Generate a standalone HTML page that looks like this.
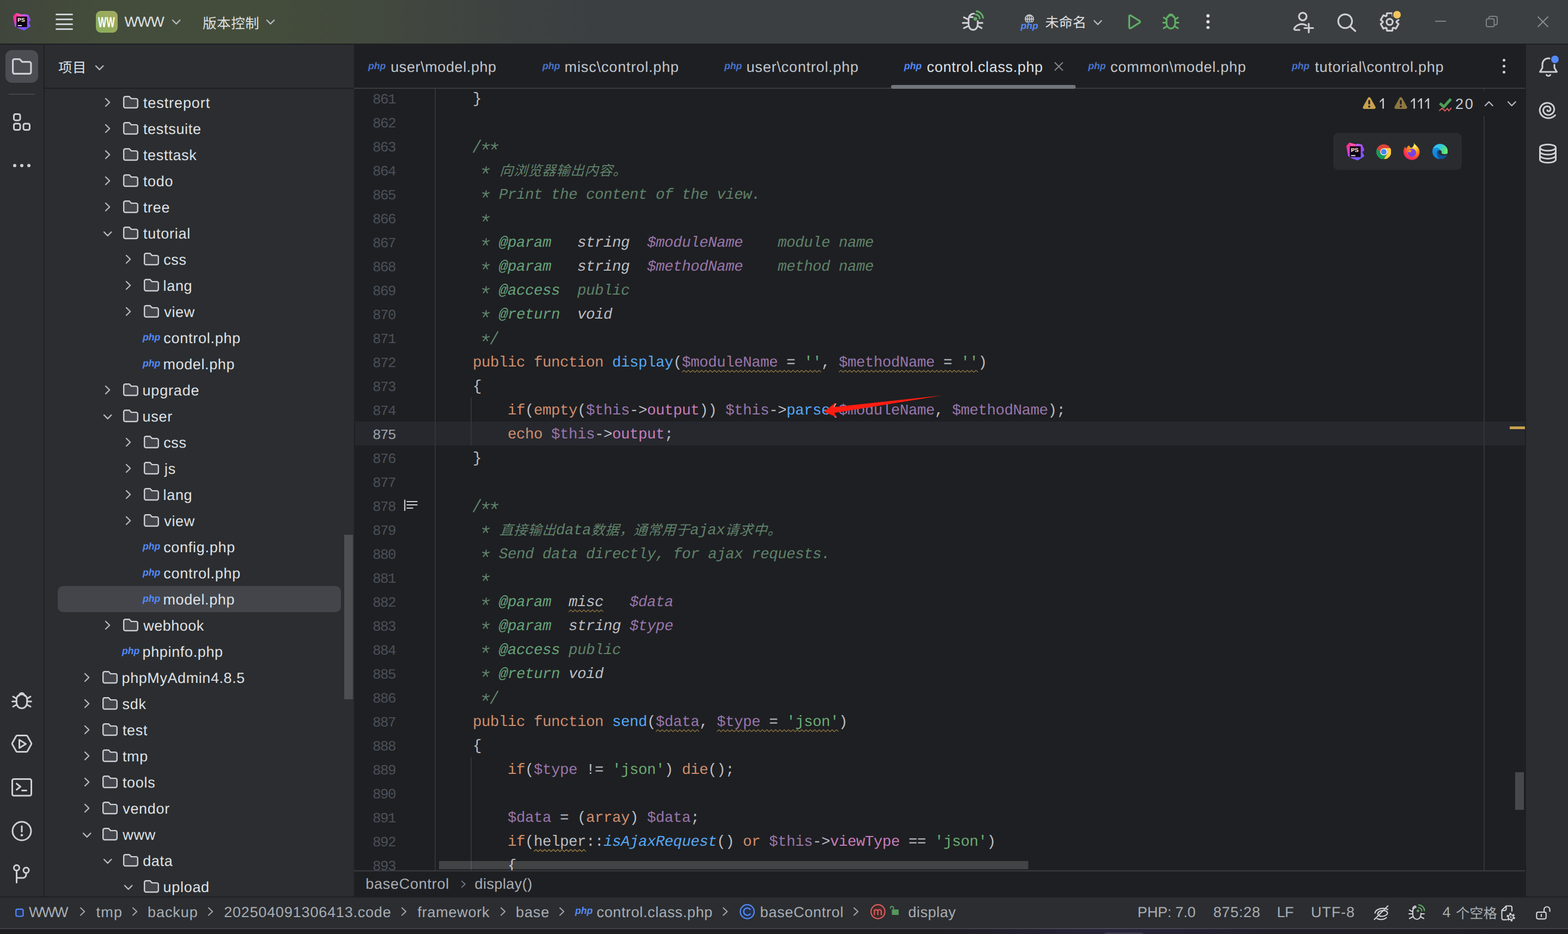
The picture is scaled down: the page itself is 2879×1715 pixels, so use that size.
<!DOCTYPE html>
<html><head><meta charset="utf-8"><title>PhpStorm</title>
<style>
html,body{margin:0;padding:0;}
body{width:2879px;height:1715px;overflow:hidden;background:#1E1F22;position:relative;font-family:"Liberation Sans",sans-serif;font-kerning:none;text-rendering:geometricPrecision;}
.r{position:absolute;display:block;}
.t{position:absolute;white-space:pre;display:block;}
.c{position:absolute;white-space:pre;font-family:"Liberation Mono",monospace;font-size:27.5px;letter-spacing:-0.503px;line-height:44px;height:44px;left:804px;color:#BCBEC4;}
.c i{font-style:italic;}
.ln{left:680px;width:46.2px;text-align:right;font-family:'Liberation Mono',monospace;font-size:26px;line-height:44px;letter-spacing:-1.5px;}
.k{color:#CF8E6D}.f{color:#56A8F5}.v{color:#9876AA}.p{color:#C77DBB}.s{color:#6AAB73}.d{color:#5F826B}.g{color:#67A37C}
</style></head><body>
<div class="r" style="left:0px;top:0px;width:2879px;height:80px;background:linear-gradient(to right,#40463C 0px,#444D3B 200px,#444D3B 480px,#41473F 760px,#3D4141 950px,#3C3F41 1100px);"></div><div class="r" style="left:0px;top:80px;width:2879px;height:2px;background:#1E1F22;"></div><div class="r" style="left:0px;top:82px;width:80px;height:1565px;background:#2B2D30;"></div><div class="r" style="left:80px;top:82px;width:2px;height:1565px;background:#1E1F22;"></div><div class="r" style="left:82px;top:82px;width:568px;height:1565px;background:#2B2D30;"></div><div class="r" style="left:82px;top:161px;width:568px;height:2px;background:#1E1F22;"></div><div class="r" style="left:2802px;top:82px;width:77px;height:1565px;background:#2B2D30;"></div><div class="r" style="left:0px;top:1646px;width:2879px;height:2px;background:#1E1F22;"></div><div class="r" style="left:0px;top:1648px;width:2879px;height:56px;background:#2B2D30;"></div><div class="r" style="left:0px;top:1704px;width:2879px;height:2px;background:linear-gradient(to right,#3F3F46 0,#3F3F46 60%,#4A4957 71%,#403F48 82%,#3F3F46 100%);"></div><div class="r" style="left:0px;top:1706px;width:2879px;height:9px;background:linear-gradient(to right,#1F1E23 0,#1F1E23 60%,#262339 71%,#201F27 82%,#1F1E23 100%);"></div><div class="r" style="left:2026px;top:1712px;width:75px;height:6px;background:#3A374B;border-radius:6px 6px 0 0;"></div><svg class="r" style="left:23.9px;top:23.9px;" width="32.2" height="32.2" viewBox="0 0 32 32"><defs><linearGradient id="psg1" x1="0.1" y1="0" x2="0.5" y2="1"><stop offset="0" stop-color="#FF2E8C"/><stop offset=".3" stop-color="#F535A0"/><stop offset=".6" stop-color="#B74AF7"/><stop offset="1" stop-color="#6B57FF"/></linearGradient>
<linearGradient id="psh1" x1="0" y1="0" x2="0.3" y2="1"><stop offset="0" stop-color="#C06CFF"/><stop offset=".5" stop-color="#9A48F2"/><stop offset="1" stop-color="#7A58FC"/></linearGradient></defs>
<path d="M0 5.7 L5.2 0 L16.9 2.85 L19.3 2 L27.8 3.35 L32 12.9 L28.5 16.9 L32 24.1 L20.3 31.8 L9.2 27.6 L3.2 24Z" fill="url(#psg1)"/>
<path d="M5.2 0 L16.9 2.85 L15.5 6.4 L8 5Z" fill="#FF5CAB" opacity=".8"/>
<path d="M15.3 5 L19.3 2 L27.8 3.35 L32 12.9 L28.5 16.9 L32 24.1 L25.6 28.3 L25.6 6.4Z" fill="url(#psh1)"/>
<rect x="6.2" y="6.4" width="19.4" height="19.3" fill="#0B020F"/>
<text x="8.3" y="16" font-family="Liberation Sans,sans-serif" font-weight="700" font-size="10" fill="#fff">PS</text>
<rect x="8.4" y="22.1" width="7.7" height="1.7" fill="#fff"/></svg><div class="r" style="left:102px;top:25.299999999999997px;width:32px;height:3.2px;background:#CED0D6;border-radius:1.6px;"></div><div class="r" style="left:102px;top:34.199999999999996px;width:32px;height:3.2px;background:#CED0D6;border-radius:1.6px;"></div><div class="r" style="left:102px;top:43.0px;width:32px;height:3.2px;background:#CED0D6;border-radius:1.6px;"></div><div class="r" style="left:102px;top:51.9px;width:32px;height:3.2px;background:#CED0D6;border-radius:1.6px;"></div><div class="r" style="left:176px;top:20px;width:40px;height:40px;background:linear-gradient(45deg,#88AE5A,#A5A95F);border-radius:9px;"></div><span class="t" style="left:180.27px;top:26px;font-size:26.8px;line-height:30px;color:#fff;font-weight:700;letter-spacing:0.462px;transform:scaleX(.6);transform-origin:0 0;">WW</span><span class="t" style="left:228.48px;top:25px;font-size:26.5px;line-height:30px;color:#DFE1E5;letter-spacing:-0.914px;">WWW</span><svg class="r" style="left:315.3px;top:34.800000000000004px;" width="17.4" height="10.8" viewBox="0 0 17.4 10.8"><path d="M2 2 L8.7 8.8 L15.4 2" fill="none" stroke="#B4B8BF" stroke-width="2.4" stroke-linecap="round" stroke-linejoin="round"/></svg><svg class="r" style="left:372.00px;top:28.77px;overflow:visible" width="130" height="36"><text x="0" y="22.5" font-size="25.6" letter-spacing="0.5" fill="#DFE1E5" font-family="'Liberation Sans','Noto Sans CJK SC',sans-serif">版本控制</text></svg><svg class="r" style="left:487.5px;top:34.800000000000004px;" width="17.4" height="10.8" viewBox="0 0 17.4 10.8"><path d="M2 2 L8.7 8.8 L15.4 2" fill="none" stroke="#B4B8BF" stroke-width="2.4" stroke-linecap="round" stroke-linejoin="round"/></svg><svg class="r" style="left:1760px;top:10px;" width="60" height="60" viewBox="0 0 60 60"><g fill="none" stroke="#CED0D6" stroke-width="3.1" stroke-linecap="round" stroke-linejoin="round">
<path d="M35.2 28.5 V35 A8.400 9.800 0 0 1 18.400 35 V27.500 C18.400 20 21.500 15.200 28.500 15"/>
<path d="M20.8 21.4 H26"/>
<path d="M9.8 21.8 L16.4 25.2 M7.7 32.1 H17 M9.800 41.600 L17 38.300 M37 32.100 H43.900 M37 38.500 L42.200 41.600"/></g>
<circle cx="30.900" cy="24.600" r="3.400" fill="#5FAD65"/>
<path d="M31.600 16.600 A8 8 0 0 1 38.870 23.900 M33.100 10.600 A14.200 14.200 0 0 1 45 22.900" fill="none" stroke="#5FAD65" stroke-width="3.100" stroke-linecap="round"/></svg><svg class="r" style="left:1880.8px;top:26.2px;" width="18" height="18" viewBox="0 0 18 18"><g fill="none" stroke="#CED0D6" stroke-width="1.75"><circle cx="9" cy="9" r="7.6"/><path d="M9 1.4 v15.2 M1.4 9 h15.2"/><ellipse cx="9" cy="9" rx="3.900" ry="7.600"/></g><rect x="0" y="15" width="18" height="4" fill="#3C3F41"/></svg><span class="t" style="left:1874.39px;top:37px;font-size:17.2px;line-height:20px;color:#548AF7;font-weight:700;font-style:italic;transform:scaleX(1.027);transform-origin:0 0;">php</span><svg class="r" style="left:1919.00px;top:28.12px;overflow:visible" width="101" height="35"><text x="0" y="22.2" font-size="25.2" letter-spacing="0.1" fill="#DFE1E5" font-family="'Liberation Sans','Noto Sans CJK SC',sans-serif">未命名</text></svg><svg class="r" style="left:2007.3px;top:36.4px;" width="17.4" height="10.8" viewBox="0 0 17.4 10.8"><path d="M2 2 L8.7 8.8 L15.4 2" fill="none" stroke="#B4B8BF" stroke-width="2.4" stroke-linecap="round" stroke-linejoin="round"/></svg><svg class="r" style="left:2067.5px;top:23.8px;" width="30.6" height="32.4" viewBox="0 0 34 36"><path d="M6 6.5 a2 2 0 0 1 3 -1.7 L27 16 a2 2 0 0 1 0 3.6 L9 31 a2 2 0 0 1 -3 -1.7z" fill="none" stroke="#5FAD65" stroke-width="3.7" stroke-linejoin="round"/></svg><svg class="r" style="left:2133.2px;top:23.3px;" width="33.5" height="33.5" viewBox="0 0 36 36"><g fill="none" stroke="#5FAD65" stroke-width="3.4" stroke-linecap="round" stroke-linejoin="round">
<path d="M9.5 14 a8.5 8.5 0 0 1 17 0 v7 a8.5 10.5 0 0 1 -17 0z"/><path d="M13 8.5 a5 5 0 0 1 10 0"/>
<path d="M3 20 h6.5 M26.5 20 h6.5 M4 10 l6 4 M32 10 l-6 4 M4 31 l6.5 -4 M32 31 l-6.5 -4"/></g></svg><div class="r" style="left:2215px;top:26.3px;width:5.8px;height:5.8px;background:#DFE1E5;border-radius:50%;"></div><div class="r" style="left:2215px;top:36.9px;width:5.8px;height:5.8px;background:#DFE1E5;border-radius:50%;"></div><div class="r" style="left:2215px;top:47.6px;width:5.8px;height:5.8px;background:#DFE1E5;border-radius:50%;"></div><svg class="r" style="left:2374px;top:18px;" width="42" height="44" viewBox="0 0 42 44"><g fill="none" stroke="#CED0D6" stroke-width="3.2" stroke-linecap="round">
<circle cx="18" cy="12.3" r="7"/><path d="M4 37 a2 2 0 0 1 -1.5 -3 a16 16 0 0 1 22 -5.5 M4 37 h8"/><path d="M21 33.5 h16 M29 25.5 v16"/></g></svg><svg class="r" style="left:2452px;top:22px;" width="42" height="40" viewBox="0 0 42 40"><g fill="none" stroke="#CED0D6" stroke-width="3.2" stroke-linecap="round"><circle cx="17.8" cy="16.9" r="12.6"/><path d="M27 26.5 L36.5 35"/></g></svg><svg class="r" style="left:2531px;top:20px;" width="42" height="42" viewBox="0 0 42 42"><g fill="none" stroke="#CED0D6" stroke-width="3.2" stroke-linejoin="round"><path d="M15.54 4.25 L25.46 4.25 L26.09 9.01 L27.48 9.81 L31.92 7.98 L36.88 16.57 L33.07 19.50 L33.07 21.10 L36.88 24.03 L31.92 32.62 L27.48 30.79 L26.09 31.59 L25.46 36.35 L15.54 36.35 L14.91 31.59 L13.52 30.79 L9.08 32.62 L4.12 24.03 L7.93 21.10 L7.93 19.50 L4.12 16.57 L9.08 7.98 L13.52 9.81 L14.91 9.01Z"/><circle cx="20.5" cy="20.3" r="5.6"/></g></svg><div class="r" style="left:2558px;top:20px;width:14.4px;height:14.4px;background:#F2C55C;border-radius:50%;box-shadow:0 0 0 2px #3C3F41;"></div><div class="r" style="left:2635px;top:38px;width:20px;height:2px;background:#7E8187;"></div><svg class="r" style="left:2727px;top:28px;" width="24" height="24" viewBox="0 0 24 24"><g fill="none" stroke="#7E8187" stroke-width="2"><rect x="2" y="6.5" width="14.5" height="14.5" rx="3"/><path d="M6.5 6.5 v-1.5 a3 3 0 0 1 3 -3 h9.5 a3 3 0 0 1 3 3 v9.5 a3 3 0 0 1 -3 3 h-2"/></g></svg><svg class="r" style="left:2822px;top:29px;" width="22" height="22" viewBox="0 0 22 22"><path d="M1.5 1.5 L20.5 20.5 M20.5 1.5 L1.5 20.5" stroke="#8A8D93" stroke-width="2" fill="none"/></svg><div class="r" style="left:10px;top:92px;width:60px;height:60px;background:#4B4D53;border-radius:12px;"></div><svg class="r" style="left:20.7px;top:106px;" width="38.5" height="32" viewBox="0 0 38.5 32"><path d="M2.6 5.6 a3 3 0 0 1 3 -3 h9.5 l4.7 5.1 h13.1 a3 3 0 0 1 3 3 v15.7 a3 3 0 0 1 -3 3 h-27.3 a3 3 0 0 1 -3 -3z" fill="none" stroke="#CED0D6" stroke-width="3.2" stroke-linejoin="round"/></svg><div class="r" style="left:16px;top:172px;width:48px;height:2px;background:#43454A;"></div><svg class="r" style="left:22px;top:206px;" width="36" height="38" viewBox="0 0 36 38"><g fill="none" stroke="#CED0D6" stroke-width="3"><rect x="3.5" y="3.4" width="11.5" height="11.5" rx="3"/><rect x="3.5" y="21" width="11.5" height="11.500" rx="3"/><rect x="21" y="21" width="11.500" height="11.500" rx="3"/></g></svg><div class="r" style="left:23.9px;top:301px;width:6px;height:6px;background:#CED0D6;border-radius:50%;"></div><div class="r" style="left:37px;top:301px;width:6px;height:6px;background:#CED0D6;border-radius:50%;"></div><div class="r" style="left:50px;top:301px;width:6px;height:6px;background:#CED0D6;border-radius:50%;"></div><svg class="r" style="left:20px;top:1266px;" width="40" height="40" viewBox="0 0 40 40"><g fill="none" stroke="#CED0D6" stroke-width="3" stroke-linecap="round" stroke-linejoin="round">
<path d="M10.3 18 a9.7 9 0 0 1 19.4 0 v6 a9.7 10.5 0 0 1 -19.4 0z"/><path d="M15 11.5 a5 5 0 0 1 10 0"/>
<path d="M2.5 22 h7.8 M29.7 22 h7.8 M4 13 l6.5 4 M36 13 l-6.500 4 M4 31.500 l6.500 -3.500 M36 31.500 l-6.500 -3.500"/></g></svg><svg class="r" style="left:20px;top:1347px;" width="40" height="38" viewBox="0 0 40 38"><g fill="none" stroke="#CED0D6" stroke-width="3" stroke-linejoin="round"><path d="M11.5 3.5 h17 a2 2 0 0 1 1.7 1 l7.3 13 a2 2 0 0 1 0 2 l-7.3 13 a2 2 0 0 1 -1.7 1 h-17 a2 2 0 0 1 -1.7 -1 l-7.3 -13 a2 2 0 0 1 0 -2 l7.3 -13 a2 2 0 0 1 1.7 -1z"/><path d="M15.5 11.5 v15 l12 -7.5z"/></g></svg><svg class="r" style="left:21px;top:1429px;" width="38" height="34" viewBox="0 0 38 34"><g fill="none" stroke="#CED0D6" stroke-width="3" stroke-linecap="round" stroke-linejoin="round"><rect x="1.5" y="1.5" width="35" height="30.5" rx="3"/><path d="M9.5 10 l7 5.5 l-7 5.5 M19.5 22.5 h8"/></g></svg><svg class="r" style="left:21px;top:1507px;" width="38" height="38" viewBox="0 0 38 38"><g fill="none" stroke="#CED0D6" stroke-width="3" stroke-linecap="round"><circle cx="19" cy="19" r="17"/><path d="M19 10 v10"/></g><circle cx="19" cy="26.5" r="2.3" fill="#CED0D6"/></svg><svg class="r" style="left:22px;top:1586px;" width="36" height="38" viewBox="0 0 36 38"><g fill="none" stroke="#CED0D6" stroke-width="3" stroke-linecap="round"><circle cx="8.5" cy="7.5" r="5"/><circle cx="26" cy="12" r="5"/><path d="M8.5 12.5 v22 M26 17 v3 a6 6 0 0 1 -6 6 h-11.5"/></g></svg><svg class="r" style="left:107.20px;top:111.25px;overflow:visible" width="77" height="36"><text x="0" y="22.4" font-size="25.4" letter-spacing="0.5" fill="#DFE1E5" font-family="'Liberation Sans','Noto Sans CJK SC',sans-serif">项目</text></svg><svg class="r" style="left:173.5px;top:119.19999999999999px;" width="17.4" height="10.8" viewBox="0 0 17.4 10.8"><path d="M2 2 L8.7 8.8 L15.4 2" fill="none" stroke="#B4B8BF" stroke-width="2.4" stroke-linecap="round" stroke-linejoin="round"/></svg><div class="r" style="left:106px;top:1076px;width:520px;height:48px;background:#43454A;border-radius:10px;"></div><svg class="r" style="left:191.6px;top:179.0px;" width="11.2" height="18" viewBox="0 0 11.2 18"><path d="M2 2 L9.2 9.0 L2 16" fill="none" stroke="#B4B8BF" stroke-width="2.4" stroke-linecap="round" stroke-linejoin="round"/></svg><svg class="r" style="left:224.8px;top:175.4px;" width="30" height="25.2" viewBox="0 0 30 25.2"><path d="M2.2 5.2 a3 3 0 0 1 3 -3 h7.3 l3.6 3.9 h8.7 a3 3 0 0 1 3 3 v10.9 a3 3 0 0 1 -3 3 h-19.6 a3 3 0 0 1 -3 -3z" fill="#43454A" stroke="#CED0D6" stroke-width="2.4" stroke-linejoin="round"/></svg><span class="t" style="left:262.89px;top:174px;font-size:27px;line-height:30px;color:#DFE1E5;letter-spacing:0.917px;">testreport</span><svg class="r" style="left:191.6px;top:227.0px;" width="11.2" height="18" viewBox="0 0 11.2 18"><path d="M2 2 L9.2 9.0 L2 16" fill="none" stroke="#B4B8BF" stroke-width="2.4" stroke-linecap="round" stroke-linejoin="round"/></svg><svg class="r" style="left:224.8px;top:223.4px;" width="30" height="25.2" viewBox="0 0 30 25.2"><path d="M2.2 5.2 a3 3 0 0 1 3 -3 h7.3 l3.6 3.9 h8.7 a3 3 0 0 1 3 3 v10.9 a3 3 0 0 1 -3 3 h-19.6 a3 3 0 0 1 -3 -3z" fill="#43454A" stroke="#CED0D6" stroke-width="2.4" stroke-linejoin="round"/></svg><span class="t" style="left:262.89px;top:222px;font-size:27px;line-height:30px;color:#DFE1E5;letter-spacing:0.700px;">testsuite</span><svg class="r" style="left:191.6px;top:275.0px;" width="11.2" height="18" viewBox="0 0 11.2 18"><path d="M2 2 L9.2 9.0 L2 16" fill="none" stroke="#B4B8BF" stroke-width="2.4" stroke-linecap="round" stroke-linejoin="round"/></svg><svg class="r" style="left:224.8px;top:271.4px;" width="30" height="25.2" viewBox="0 0 30 25.2"><path d="M2.2 5.2 a3 3 0 0 1 3 -3 h7.3 l3.6 3.9 h8.7 a3 3 0 0 1 3 3 v10.9 a3 3 0 0 1 -3 3 h-19.6 a3 3 0 0 1 -3 -3z" fill="#43454A" stroke="#CED0D6" stroke-width="2.4" stroke-linejoin="round"/></svg><span class="t" style="left:262.89px;top:270px;font-size:27px;line-height:30px;color:#DFE1E5;letter-spacing:0.700px;">testtask</span><svg class="r" style="left:191.6px;top:323.0px;" width="11.2" height="18" viewBox="0 0 11.2 18"><path d="M2 2 L9.2 9.0 L2 16" fill="none" stroke="#B4B8BF" stroke-width="2.4" stroke-linecap="round" stroke-linejoin="round"/></svg><svg class="r" style="left:224.8px;top:319.4px;" width="30" height="25.2" viewBox="0 0 30 25.2"><path d="M2.2 5.2 a3 3 0 0 1 3 -3 h7.3 l3.6 3.9 h8.7 a3 3 0 0 1 3 3 v10.9 a3 3 0 0 1 -3 3 h-19.6 a3 3 0 0 1 -3 -3z" fill="#43454A" stroke="#CED0D6" stroke-width="2.4" stroke-linejoin="round"/></svg><span class="t" style="left:262.89px;top:318px;font-size:27px;line-height:30px;color:#DFE1E5;letter-spacing:0.700px;">todo</span><svg class="r" style="left:191.6px;top:371.0px;" width="11.2" height="18" viewBox="0 0 11.2 18"><path d="M2 2 L9.2 9.0 L2 16" fill="none" stroke="#B4B8BF" stroke-width="2.4" stroke-linecap="round" stroke-linejoin="round"/></svg><svg class="r" style="left:224.8px;top:367.4px;" width="30" height="25.2" viewBox="0 0 30 25.2"><path d="M2.2 5.2 a3 3 0 0 1 3 -3 h7.3 l3.6 3.9 h8.7 a3 3 0 0 1 3 3 v10.9 a3 3 0 0 1 -3 3 h-19.6 a3 3 0 0 1 -3 -3z" fill="#43454A" stroke="#CED0D6" stroke-width="2.4" stroke-linejoin="round"/></svg><span class="t" style="left:262.89px;top:366px;font-size:27px;line-height:30px;color:#DFE1E5;letter-spacing:0.700px;">tree</span><svg class="r" style="left:189.0px;top:423.6px;" width="17.4" height="10.8" viewBox="0 0 17.4 10.8"><path d="M2 2 L8.7 8.8 L15.4 2" fill="none" stroke="#B4B8BF" stroke-width="2.4" stroke-linecap="round" stroke-linejoin="round"/></svg><svg class="r" style="left:224.8px;top:415.4px;" width="30" height="25.2" viewBox="0 0 30 25.2"><path d="M2.2 5.2 a3 3 0 0 1 3 -3 h7.3 l3.6 3.9 h8.7 a3 3 0 0 1 3 3 v10.9 a3 3 0 0 1 -3 3 h-19.6 a3 3 0 0 1 -3 -3z" fill="#43454A" stroke="#CED0D6" stroke-width="2.4" stroke-linejoin="round"/></svg><span class="t" style="left:262.89px;top:414px;font-size:27px;line-height:30px;color:#DFE1E5;letter-spacing:0.754px;">tutorial</span><svg class="r" style="left:229.6px;top:467.0px;" width="11.2" height="18" viewBox="0 0 11.2 18"><path d="M2 2 L9.2 9.0 L2 16" fill="none" stroke="#B4B8BF" stroke-width="2.4" stroke-linecap="round" stroke-linejoin="round"/></svg><svg class="r" style="left:262.8px;top:463.4px;" width="30" height="25.2" viewBox="0 0 30 25.2"><path d="M2.2 5.2 a3 3 0 0 1 3 -3 h7.3 l3.6 3.9 h8.7 a3 3 0 0 1 3 3 v10.9 a3 3 0 0 1 -3 3 h-19.6 a3 3 0 0 1 -3 -3z" fill="#43454A" stroke="#CED0D6" stroke-width="2.4" stroke-linejoin="round"/></svg><span class="t" style="left:300.15px;top:462px;font-size:27px;line-height:30px;color:#DFE1E5;letter-spacing:0.700px;">css</span><svg class="r" style="left:229.6px;top:515.0px;" width="11.2" height="18" viewBox="0 0 11.2 18"><path d="M2 2 L9.2 9.0 L2 16" fill="none" stroke="#B4B8BF" stroke-width="2.4" stroke-linecap="round" stroke-linejoin="round"/></svg><svg class="r" style="left:262.8px;top:511.4px;" width="30" height="25.2" viewBox="0 0 30 25.2"><path d="M2.2 5.2 a3 3 0 0 1 3 -3 h7.3 l3.6 3.9 h8.7 a3 3 0 0 1 3 3 v10.9 a3 3 0 0 1 -3 3 h-19.6 a3 3 0 0 1 -3 -3z" fill="#43454A" stroke="#CED0D6" stroke-width="2.4" stroke-linejoin="round"/></svg><span class="t" style="left:299.48px;top:510px;font-size:27px;line-height:30px;color:#DFE1E5;letter-spacing:0.700px;">lang</span><svg class="r" style="left:229.6px;top:563.0px;" width="11.2" height="18" viewBox="0 0 11.2 18"><path d="M2 2 L9.2 9.0 L2 16" fill="none" stroke="#B4B8BF" stroke-width="2.4" stroke-linecap="round" stroke-linejoin="round"/></svg><svg class="r" style="left:262.8px;top:559.4px;" width="30" height="25.2" viewBox="0 0 30 25.2"><path d="M2.2 5.2 a3 3 0 0 1 3 -3 h7.3 l3.6 3.9 h8.7 a3 3 0 0 1 3 3 v10.9 a3 3 0 0 1 -3 3 h-19.6 a3 3 0 0 1 -3 -3z" fill="#43454A" stroke="#CED0D6" stroke-width="2.4" stroke-linejoin="round"/></svg><span class="t" style="left:301.21px;top:558px;font-size:27px;line-height:30px;color:#DFE1E5;letter-spacing:0.700px;">view</span><span class="t" style="left:262.29px;top:609px;font-size:18px;line-height:20px;color:#548AF7;font-weight:700;font-style:italic;transform:scaleX(0.982);transform-origin:0 0;">php</span><span class="t" style="left:300.15px;top:606px;font-size:27px;line-height:30px;color:#DFE1E5;letter-spacing:0.749px;">control.php</span><span class="t" style="left:262.29px;top:657px;font-size:18px;line-height:20px;color:#548AF7;font-weight:700;font-style:italic;transform:scaleX(0.982);transform-origin:0 0;">php</span><span class="t" style="left:299.51px;top:654px;font-size:27px;line-height:30px;color:#DFE1E5;letter-spacing:0.605px;">model.php</span><svg class="r" style="left:191.6px;top:707.0px;" width="11.2" height="18" viewBox="0 0 11.2 18"><path d="M2 2 L9.2 9.0 L2 16" fill="none" stroke="#B4B8BF" stroke-width="2.4" stroke-linecap="round" stroke-linejoin="round"/></svg><svg class="r" style="left:224.8px;top:703.4px;" width="30" height="25.2" viewBox="0 0 30 25.2"><path d="M2.2 5.2 a3 3 0 0 1 3 -3 h7.3 l3.6 3.9 h8.7 a3 3 0 0 1 3 3 v10.9 a3 3 0 0 1 -3 3 h-19.6 a3 3 0 0 1 -3 -3z" fill="#43454A" stroke="#CED0D6" stroke-width="2.4" stroke-linejoin="round"/></svg><span class="t" style="left:261.55px;top:702px;font-size:27px;line-height:30px;color:#DFE1E5;letter-spacing:0.811px;">upgrade</span><svg class="r" style="left:189.0px;top:759.6px;" width="17.4" height="10.8" viewBox="0 0 17.4 10.8"><path d="M2 2 L8.7 8.8 L15.4 2" fill="none" stroke="#B4B8BF" stroke-width="2.4" stroke-linecap="round" stroke-linejoin="round"/></svg><svg class="r" style="left:224.8px;top:751.4px;" width="30" height="25.2" viewBox="0 0 30 25.2"><path d="M2.2 5.2 a3 3 0 0 1 3 -3 h7.3 l3.6 3.9 h8.7 a3 3 0 0 1 3 3 v10.9 a3 3 0 0 1 -3 3 h-19.6 a3 3 0 0 1 -3 -3z" fill="#43454A" stroke="#CED0D6" stroke-width="2.4" stroke-linejoin="round"/></svg><span class="t" style="left:261.55px;top:750px;font-size:27px;line-height:30px;color:#DFE1E5;letter-spacing:0.700px;">user</span><svg class="r" style="left:229.6px;top:803.0px;" width="11.2" height="18" viewBox="0 0 11.2 18"><path d="M2 2 L9.2 9.0 L2 16" fill="none" stroke="#B4B8BF" stroke-width="2.4" stroke-linecap="round" stroke-linejoin="round"/></svg><svg class="r" style="left:262.8px;top:799.4px;" width="30" height="25.2" viewBox="0 0 30 25.2"><path d="M2.2 5.2 a3 3 0 0 1 3 -3 h7.3 l3.6 3.9 h8.7 a3 3 0 0 1 3 3 v10.9 a3 3 0 0 1 -3 3 h-19.6 a3 3 0 0 1 -3 -3z" fill="#43454A" stroke="#CED0D6" stroke-width="2.4" stroke-linejoin="round"/></svg><span class="t" style="left:300.15px;top:798px;font-size:27px;line-height:30px;color:#DFE1E5;letter-spacing:0.700px;">css</span><svg class="r" style="left:229.6px;top:851.0px;" width="11.2" height="18" viewBox="0 0 11.2 18"><path d="M2 2 L9.2 9.0 L2 16" fill="none" stroke="#B4B8BF" stroke-width="2.4" stroke-linecap="round" stroke-linejoin="round"/></svg><svg class="r" style="left:262.8px;top:847.4px;" width="30" height="25.2" viewBox="0 0 30 25.2"><path d="M2.2 5.2 a3 3 0 0 1 3 -3 h7.3 l3.6 3.9 h8.7 a3 3 0 0 1 3 3 v10.9 a3 3 0 0 1 -3 3 h-19.6 a3 3 0 0 1 -3 -3z" fill="#43454A" stroke="#CED0D6" stroke-width="2.4" stroke-linejoin="round"/></svg><span class="t" style="left:301.96px;top:846px;font-size:27px;line-height:30px;color:#DFE1E5;letter-spacing:0.700px;">js</span><svg class="r" style="left:229.6px;top:899.0px;" width="11.2" height="18" viewBox="0 0 11.2 18"><path d="M2 2 L9.2 9.0 L2 16" fill="none" stroke="#B4B8BF" stroke-width="2.4" stroke-linecap="round" stroke-linejoin="round"/></svg><svg class="r" style="left:262.8px;top:895.4px;" width="30" height="25.2" viewBox="0 0 30 25.2"><path d="M2.2 5.2 a3 3 0 0 1 3 -3 h7.3 l3.6 3.9 h8.7 a3 3 0 0 1 3 3 v10.9 a3 3 0 0 1 -3 3 h-19.6 a3 3 0 0 1 -3 -3z" fill="#43454A" stroke="#CED0D6" stroke-width="2.4" stroke-linejoin="round"/></svg><span class="t" style="left:299.48px;top:894px;font-size:27px;line-height:30px;color:#DFE1E5;letter-spacing:0.700px;">lang</span><svg class="r" style="left:229.6px;top:947.0px;" width="11.2" height="18" viewBox="0 0 11.2 18"><path d="M2 2 L9.2 9.0 L2 16" fill="none" stroke="#B4B8BF" stroke-width="2.4" stroke-linecap="round" stroke-linejoin="round"/></svg><svg class="r" style="left:262.8px;top:943.4px;" width="30" height="25.2" viewBox="0 0 30 25.2"><path d="M2.2 5.2 a3 3 0 0 1 3 -3 h7.3 l3.6 3.9 h8.7 a3 3 0 0 1 3 3 v10.9 a3 3 0 0 1 -3 3 h-19.6 a3 3 0 0 1 -3 -3z" fill="#43454A" stroke="#CED0D6" stroke-width="2.4" stroke-linejoin="round"/></svg><span class="t" style="left:301.21px;top:942px;font-size:27px;line-height:30px;color:#DFE1E5;letter-spacing:0.700px;">view</span><span class="t" style="left:262.29px;top:993px;font-size:18px;line-height:20px;color:#548AF7;font-weight:700;font-style:italic;transform:scaleX(0.982);transform-origin:0 0;">php</span><span class="t" style="left:300.15px;top:990px;font-size:27px;line-height:30px;color:#DFE1E5;letter-spacing:0.720px;">config.php</span><span class="t" style="left:262.29px;top:1041px;font-size:18px;line-height:20px;color:#548AF7;font-weight:700;font-style:italic;transform:scaleX(0.982);transform-origin:0 0;">php</span><span class="t" style="left:300.15px;top:1038px;font-size:27px;line-height:30px;color:#DFE1E5;letter-spacing:0.749px;">control.php</span><span class="t" style="left:262.29px;top:1089px;font-size:18px;line-height:20px;color:#548AF7;font-weight:700;font-style:italic;transform:scaleX(0.982);transform-origin:0 0;">php</span><span class="t" style="left:299.51px;top:1086px;font-size:27px;line-height:30px;color:#DFE1E5;letter-spacing:0.605px;">model.php</span><svg class="r" style="left:191.6px;top:1139.0px;" width="11.2" height="18" viewBox="0 0 11.2 18"><path d="M2 2 L9.2 9.0 L2 16" fill="none" stroke="#B4B8BF" stroke-width="2.4" stroke-linecap="round" stroke-linejoin="round"/></svg><svg class="r" style="left:224.8px;top:1135.4px;" width="30" height="25.2" viewBox="0 0 30 25.2"><path d="M2.2 5.2 a3 3 0 0 1 3 -3 h7.3 l3.6 3.9 h8.7 a3 3 0 0 1 3 3 v10.9 a3 3 0 0 1 -3 3 h-19.6 a3 3 0 0 1 -3 -3z" fill="#43454A" stroke="#CED0D6" stroke-width="2.4" stroke-linejoin="round"/></svg><span class="t" style="left:263.34px;top:1134px;font-size:27px;line-height:30px;color:#DFE1E5;letter-spacing:0.474px;">webhook</span><span class="t" style="left:224.29px;top:1185px;font-size:18px;line-height:20px;color:#548AF7;font-weight:700;font-style:italic;transform:scaleX(0.982);transform-origin:0 0;">php</span><span class="t" style="left:261.56px;top:1182px;font-size:27px;line-height:30px;color:#DFE1E5;letter-spacing:0.644px;">phpinfo.php</span><svg class="r" style="left:153.6px;top:1235.0px;" width="11.2" height="18" viewBox="0 0 11.2 18"><path d="M2 2 L9.2 9.0 L2 16" fill="none" stroke="#B4B8BF" stroke-width="2.4" stroke-linecap="round" stroke-linejoin="round"/></svg><svg class="r" style="left:186.8px;top:1231.4px;" width="30" height="25.2" viewBox="0 0 30 25.2"><path d="M2.2 5.2 a3 3 0 0 1 3 -3 h7.3 l3.6 3.9 h8.7 a3 3 0 0 1 3 3 v10.9 a3 3 0 0 1 -3 3 h-19.6 a3 3 0 0 1 -3 -3z" fill="#43454A" stroke="#CED0D6" stroke-width="2.4" stroke-linejoin="round"/></svg><span class="t" style="left:223.56px;top:1230px;font-size:27px;line-height:30px;color:#DFE1E5;letter-spacing:0.582px;">phpMyAdmin4.8.5</span><svg class="r" style="left:153.6px;top:1283.0px;" width="11.2" height="18" viewBox="0 0 11.2 18"><path d="M2 2 L9.2 9.0 L2 16" fill="none" stroke="#B4B8BF" stroke-width="2.4" stroke-linecap="round" stroke-linejoin="round"/></svg><svg class="r" style="left:186.8px;top:1279.4px;" width="30" height="25.2" viewBox="0 0 30 25.2"><path d="M2.2 5.2 a3 3 0 0 1 3 -3 h7.3 l3.6 3.9 h8.7 a3 3 0 0 1 3 3 v10.9 a3 3 0 0 1 -3 3 h-19.6 a3 3 0 0 1 -3 -3z" fill="#43454A" stroke="#CED0D6" stroke-width="2.4" stroke-linejoin="round"/></svg><span class="t" style="left:224.55px;top:1278px;font-size:27px;line-height:30px;color:#DFE1E5;letter-spacing:0.700px;">sdk</span><svg class="r" style="left:153.6px;top:1331.0px;" width="11.2" height="18" viewBox="0 0 11.2 18"><path d="M2 2 L9.2 9.0 L2 16" fill="none" stroke="#B4B8BF" stroke-width="2.4" stroke-linecap="round" stroke-linejoin="round"/></svg><svg class="r" style="left:186.8px;top:1327.4px;" width="30" height="25.2" viewBox="0 0 30 25.2"><path d="M2.2 5.2 a3 3 0 0 1 3 -3 h7.3 l3.6 3.9 h8.7 a3 3 0 0 1 3 3 v10.9 a3 3 0 0 1 -3 3 h-19.6 a3 3 0 0 1 -3 -3z" fill="#43454A" stroke="#CED0D6" stroke-width="2.4" stroke-linejoin="round"/></svg><span class="t" style="left:224.89px;top:1326px;font-size:27px;line-height:30px;color:#DFE1E5;letter-spacing:0.700px;">test</span><svg class="r" style="left:153.6px;top:1379.0px;" width="11.2" height="18" viewBox="0 0 11.2 18"><path d="M2 2 L9.2 9.0 L2 16" fill="none" stroke="#B4B8BF" stroke-width="2.4" stroke-linecap="round" stroke-linejoin="round"/></svg><svg class="r" style="left:186.8px;top:1375.4px;" width="30" height="25.2" viewBox="0 0 30 25.2"><path d="M2.2 5.2 a3 3 0 0 1 3 -3 h7.3 l3.6 3.9 h8.7 a3 3 0 0 1 3 3 v10.9 a3 3 0 0 1 -3 3 h-19.6 a3 3 0 0 1 -3 -3z" fill="#43454A" stroke="#CED0D6" stroke-width="2.4" stroke-linejoin="round"/></svg><span class="t" style="left:224.89px;top:1374px;font-size:27px;line-height:30px;color:#DFE1E5;letter-spacing:0.700px;">tmp</span><svg class="r" style="left:153.6px;top:1427.0px;" width="11.2" height="18" viewBox="0 0 11.2 18"><path d="M2 2 L9.2 9.0 L2 16" fill="none" stroke="#B4B8BF" stroke-width="2.4" stroke-linecap="round" stroke-linejoin="round"/></svg><svg class="r" style="left:186.8px;top:1423.4px;" width="30" height="25.2" viewBox="0 0 30 25.2"><path d="M2.2 5.2 a3 3 0 0 1 3 -3 h7.3 l3.6 3.9 h8.7 a3 3 0 0 1 3 3 v10.9 a3 3 0 0 1 -3 3 h-19.6 a3 3 0 0 1 -3 -3z" fill="#43454A" stroke="#CED0D6" stroke-width="2.4" stroke-linejoin="round"/></svg><span class="t" style="left:224.89px;top:1422px;font-size:27px;line-height:30px;color:#DFE1E5;letter-spacing:0.700px;">tools</span><svg class="r" style="left:153.6px;top:1475.0px;" width="11.2" height="18" viewBox="0 0 11.2 18"><path d="M2 2 L9.2 9.0 L2 16" fill="none" stroke="#B4B8BF" stroke-width="2.4" stroke-linecap="round" stroke-linejoin="round"/></svg><svg class="r" style="left:186.8px;top:1471.4px;" width="30" height="25.2" viewBox="0 0 30 25.2"><path d="M2.2 5.2 a3 3 0 0 1 3 -3 h7.3 l3.6 3.9 h8.7 a3 3 0 0 1 3 3 v10.9 a3 3 0 0 1 -3 3 h-19.6 a3 3 0 0 1 -3 -3z" fill="#43454A" stroke="#CED0D6" stroke-width="2.4" stroke-linejoin="round"/></svg><span class="t" style="left:225.21px;top:1470px;font-size:27px;line-height:30px;color:#DFE1E5;letter-spacing:0.700px;">vendor</span><svg class="r" style="left:151.0px;top:1527.6px;" width="17.4" height="10.8" viewBox="0 0 17.4 10.8"><path d="M2 2 L8.7 8.8 L15.4 2" fill="none" stroke="#B4B8BF" stroke-width="2.4" stroke-linecap="round" stroke-linejoin="round"/></svg><svg class="r" style="left:186.8px;top:1519.4px;" width="30" height="25.2" viewBox="0 0 30 25.2"><path d="M2.2 5.2 a3 3 0 0 1 3 -3 h7.3 l3.6 3.9 h8.7 a3 3 0 0 1 3 3 v10.9 a3 3 0 0 1 -3 3 h-19.6 a3 3 0 0 1 -3 -3z" fill="#43454A" stroke="#CED0D6" stroke-width="2.4" stroke-linejoin="round"/></svg><span class="t" style="left:225.34px;top:1518px;font-size:27px;line-height:30px;color:#DFE1E5;letter-spacing:0.700px;">www</span><svg class="r" style="left:189.0px;top:1575.6px;" width="17.4" height="10.8" viewBox="0 0 17.4 10.8"><path d="M2 2 L8.7 8.8 L15.4 2" fill="none" stroke="#B4B8BF" stroke-width="2.4" stroke-linecap="round" stroke-linejoin="round"/></svg><svg class="r" style="left:224.8px;top:1567.4px;" width="30" height="25.2" viewBox="0 0 30 25.2"><path d="M2.2 5.2 a3 3 0 0 1 3 -3 h7.3 l3.6 3.9 h8.7 a3 3 0 0 1 3 3 v10.9 a3 3 0 0 1 -3 3 h-19.6 a3 3 0 0 1 -3 -3z" fill="#43454A" stroke="#CED0D6" stroke-width="2.4" stroke-linejoin="round"/></svg><span class="t" style="left:262.17px;top:1566px;font-size:27px;line-height:30px;color:#DFE1E5;letter-spacing:0.700px;">data</span><svg class="r" style="left:227.0px;top:1623.6px;" width="17.4" height="10.8" viewBox="0 0 17.4 10.8"><path d="M2 2 L8.7 8.8 L15.4 2" fill="none" stroke="#B4B8BF" stroke-width="2.4" stroke-linecap="round" stroke-linejoin="round"/></svg><svg class="r" style="left:262.8px;top:1615.4px;" width="30" height="25.2" viewBox="0 0 30 25.2"><path d="M2.2 5.2 a3 3 0 0 1 3 -3 h7.3 l3.6 3.9 h8.7 a3 3 0 0 1 3 3 v10.9 a3 3 0 0 1 -3 3 h-19.6 a3 3 0 0 1 -3 -3z" fill="#43454A" stroke="#CED0D6" stroke-width="2.4" stroke-linejoin="round"/></svg><span class="t" style="left:299.55px;top:1614px;font-size:27px;line-height:30px;color:#DFE1E5;letter-spacing:0.700px;">upload</span><div class="r" style="left:632px;top:982px;width:16px;height:302px;background:#4D4E51;"></div><div class="r" style="left:650px;top:161px;width:2150px;height:2px;background:#393B40;"></div><span class="t" style="left:676.39px;top:111px;font-size:18px;line-height:20px;color:#4A73C9;font-weight:700;font-style:italic;transform:scaleX(0.982);transform-origin:0 0;">php</span><span class="t" style="left:717.25px;top:108px;font-size:27px;line-height:30px;color:#C3C6CC;letter-spacing:0.598px;">user\model.php</span><span class="t" style="left:996.39px;top:111px;font-size:18px;line-height:20px;color:#4A73C9;font-weight:700;font-style:italic;transform:scaleX(0.982);transform-origin:0 0;">php</span><span class="t" style="left:1036.61px;top:108px;font-size:27px;line-height:30px;color:#C3C6CC;letter-spacing:0.863px;">misc\control.php</span><span class="t" style="left:1330.39px;top:111px;font-size:18px;line-height:20px;color:#4A73C9;font-weight:700;font-style:italic;transform:scaleX(0.982);transform-origin:0 0;">php</span><span class="t" style="left:1370.55px;top:108px;font-size:27px;line-height:30px;color:#C3C6CC;letter-spacing:0.798px;">user\control.php</span><span class="t" style="left:1660.39px;top:111px;font-size:18px;line-height:20px;color:#548AF7;font-weight:700;font-style:italic;transform:scaleX(0.982);transform-origin:0 0;">php</span><span class="t" style="left:1701.85px;top:108px;font-size:27px;line-height:30px;color:#DFE1E5;letter-spacing:0.636px;">control.class.php</span><svg class="r" style="left:1934px;top:112px;" width="20" height="20" viewBox="0 0 20 20"><path d="M3 3 L17 17 M17 3 L3 17" stroke="#868A91" stroke-width="1.8" fill="none" stroke-linecap="round"/></svg><div class="r" style="left:1636px;top:155.5px;width:339px;height:7.5px;background:#71757C;border-radius:4px;"></div><span class="t" style="left:1998.39px;top:111px;font-size:18px;line-height:20px;color:#4A73C9;font-weight:700;font-style:italic;transform:scaleX(0.982);transform-origin:0 0;">php</span><span class="t" style="left:2038.85px;top:108px;font-size:27px;line-height:30px;color:#C3C6CC;letter-spacing:0.777px;">common\model.php</span><span class="t" style="left:2372.39px;top:111px;font-size:18px;line-height:20px;color:#4A73C9;font-weight:700;font-style:italic;transform:scaleX(0.982);transform-origin:0 0;">php</span><span class="t" style="left:2414.29px;top:108px;font-size:27px;line-height:30px;color:#C3C6CC;letter-spacing:0.743px;">tutorial\control.php</span><div class="r" style="left:2759px;top:107.8px;width:5.4px;height:5.4px;background:#CED0D6;border-radius:50%;"></div><div class="r" style="left:2759px;top:118.8px;width:5.4px;height:5.4px;background:#CED0D6;border-radius:50%;"></div><div class="r" style="left:2759px;top:129.8px;width:5.4px;height:5.4px;background:#CED0D6;border-radius:50%;"></div><div class="r" style="left:652px;top:774px;width:2148px;height:44px;background:#26282E;"></div><div class="r" style="left:798px;top:163px;width:2px;height:1436px;background:#313438;"></div><div class="r" style="left:2724px;top:163px;width:2px;height:1436px;background:#313438;"></div><div class="r" style="left:2700px;top:166px;width:60px;height:47px;background:#1E1F22;"></div><div class="r" style="left:864px;top:730px;width:2px;height:88px;background:#313438;"></div><div class="r" style="left:864px;top:1390px;width:2px;height:209px;background:#313438;"></div><div class="r" style="left:0;top:163px;width:2801px;height:1436px;overflow:hidden"><div class="r" style="left:0;top:-163px;width:2801px;height:1715px"><div class="c" style="top:161px">    }</div><div class="t ln" style="top:161px;color:#4B5059">861</div><div class="t ln" style="top:205px;color:#4B5059">862</div><div class="c" style="top:249px">    <i class="d">   </i></div><div class="t ln" style="top:249px;color:#4B5059">863</div><div class="c" style="top:293px">     <i class="d"> </i></div><div class="t ln" style="top:293px;color:#4B5059">864</div><div class="c" style="top:337px">     <i class="d">  Print the content of the view.</i></div><div class="t ln" style="top:337px;color:#4B5059">865</div><div class="c" style="top:381px">     <i class="d"> </i></div><div class="t ln" style="top:381px;color:#4B5059">866</div><div class="c" style="top:425px">     <i class="d">  </i><i class="g">@param</i>   <i>string</i>  <i class="v">$moduleName</i>    <i class="d">module name</i></div><div class="t ln" style="top:425px;color:#4B5059">867</div><div class="c" style="top:469px">     <i class="d">  </i><i class="g">@param</i>   <i>string</i>  <i class="v">$methodName</i>    <i class="d">method name</i></div><div class="t ln" style="top:469px;color:#4B5059">868</div><div class="c" style="top:513px">     <i class="d">  </i><i class="g">@access</i>  <i class="d">public</i></div><div class="t ln" style="top:513px;color:#4B5059">869</div><div class="c" style="top:557px">     <i class="d">  </i><i class="g">@return</i>  <i>void</i></div><div class="t ln" style="top:557px;color:#4B5059">870</div><div class="c" style="top:601px">     <i class="d">  </i></div><div class="t ln" style="top:601px;color:#4B5059">871</div><div class="c" style="top:645px">    <span class="k">public</span> <span class="k">function</span> <span class="f">display</span>(<span class="v">$moduleName</span> = <span class="s">''</span>, <span class="v">$methodName</span> = <span class="s">''</span>)</div><div class="t ln" style="top:645px;color:#4B5059">872</div><div class="c" style="top:689px">    {</div><div class="t ln" style="top:689px;color:#4B5059">873</div><div class="c" style="top:733px">        <span class="k">if</span>(<span class="k">empty</span>(<span class="v">$this</span>-&gt;<span class="p">output</span>)) <span class="v">$this</span>-&gt;<span class="f">parse</span>(<span class="v">$moduleName</span>, <span class="v">$methodName</span>);</div><div class="t ln" style="top:733px;color:#4B5059">874</div><div class="c" style="top:777px">        <span class="k">echo</span> <span class="v">$this</span>-&gt;<span class="p">output</span>;</div><div class="t ln" style="top:777px;color:#A1A3AB">875</div><div class="c" style="top:821px">    }</div><div class="t ln" style="top:821px;color:#4B5059">876</div><div class="t ln" style="top:865px;color:#4B5059">877</div><div class="c" style="top:909px">    <i class="d">   </i></div><div class="t ln" style="top:909px;color:#4B5059">878</div><div class="c" style="top:953px">     <i class="d"> </i></div><div class="t ln" style="top:953px;color:#4B5059">879</div><div class="c" style="top:997px">     <i class="d">  Send data directly, for ajax requests.</i></div><div class="t ln" style="top:997px;color:#4B5059">880</div><div class="c" style="top:1041px">     <i class="d"> </i></div><div class="t ln" style="top:1041px;color:#4B5059">881</div><div class="c" style="top:1085px">     <i class="d">  </i><i class="g">@param</i>  <i>misc</i>   <i class="v">$data</i></div><div class="t ln" style="top:1085px;color:#4B5059">882</div><div class="c" style="top:1129px">     <i class="d">  </i><i class="g">@param</i>  <i>string</i> <i class="v">$type</i></div><div class="t ln" style="top:1129px;color:#4B5059">883</div><div class="c" style="top:1173px">     <i class="d">  </i><i class="g">@access</i> <i class="d">public</i></div><div class="t ln" style="top:1173px;color:#4B5059">884</div><div class="c" style="top:1217px">     <i class="d">  </i><i class="g">@return</i> <i>void</i></div><div class="t ln" style="top:1217px;color:#4B5059">885</div><div class="c" style="top:1261px">     <i class="d">  </i></div><div class="t ln" style="top:1261px;color:#4B5059">886</div><div class="c" style="top:1305px">    <span class="k">public</span> <span class="k">function</span> <span class="f">send</span>(<span class="v">$data</span>, <span class="v">$type</span> = <span class="s">'json'</span>)</div><div class="t ln" style="top:1305px;color:#4B5059">887</div><div class="c" style="top:1349px">    {</div><div class="t ln" style="top:1349px;color:#4B5059">888</div><div class="c" style="top:1393px">        <span class="k">if</span>(<span class="v">$type</span> != <span class="s">'json'</span>) <span class="k">die</span>();</div><div class="t ln" style="top:1393px;color:#4B5059">889</div><div class="t ln" style="top:1437px;color:#4B5059">890</div><div class="c" style="top:1481px">        <span class="v">$data</span> = (<span class="k">array</span>) <span class="v">$data</span>;</div><div class="t ln" style="top:1481px;color:#4B5059">891</div><div class="c" style="top:1525px">        <span class="k">if</span>(helper::<i class="f">isAjaxRequest</i>() <span class="k">or</span> <span class="v">$this</span>-&gt;<span class="p">viewType</span> == <span class="s">'json'</span>)</div><div class="t ln" style="top:1525px;color:#4B5059">892</div><div class="c" style="top:1569px">        {</div><div class="t ln" style="top:1569px;color:#4B5059">893</div><svg class="r" style="left:883px;top:258.8px;" width="18" height="18" viewBox="0 0 18 18"><g transform="translate(9 9) skewX(-8)" stroke="#5F826B" stroke-width="2.1" fill="none"><path d="M0 0 V-6.6 M0 0 L-6.8 -2.2 M0 0 L6.8 -2.2 M0 0 L-4.2 6.4 M0 0 L4.2 6.4"/></g></svg><svg class="r" style="left:899px;top:258.8px;" width="18" height="18" viewBox="0 0 18 18"><g transform="translate(9 9) skewX(-8)" stroke="#5F826B" stroke-width="2.1" fill="none"><path d="M0 0 V-6.6 M0 0 L-6.8 -2.2 M0 0 L6.8 -2.2 M0 0 L-4.2 6.4 M0 0 L4.2 6.4"/></g></svg><svg class="r" style="left:883px;top:918.8px;" width="18" height="18" viewBox="0 0 18 18"><g transform="translate(9 9) skewX(-8)" stroke="#5F826B" stroke-width="2.1" fill="none"><path d="M0 0 V-6.6 M0 0 L-6.8 -2.2 M0 0 L6.8 -2.2 M0 0 L-4.2 6.4 M0 0 L4.2 6.4"/></g></svg><svg class="r" style="left:899px;top:918.8px;" width="18" height="18" viewBox="0 0 18 18"><g transform="translate(9 9) skewX(-8)" stroke="#5F826B" stroke-width="2.1" fill="none"><path d="M0 0 V-6.6 M0 0 L-6.8 -2.2 M0 0 L6.8 -2.2 M0 0 L-4.2 6.4 M0 0 L4.2 6.4"/></g></svg><svg class="r" style="left:883px;top:302.8px;" width="18" height="18" viewBox="0 0 18 18"><g transform="translate(9 9) skewX(-8)" stroke="#5F826B" stroke-width="2.1" fill="none"><path d="M0 0 V-6.6 M0 0 L-6.8 -2.2 M0 0 L6.8 -2.2 M0 0 L-4.2 6.4 M0 0 L4.2 6.4"/></g></svg><svg class="r" style="left:883px;top:346.8px;" width="18" height="18" viewBox="0 0 18 18"><g transform="translate(9 9) skewX(-8)" stroke="#5F826B" stroke-width="2.1" fill="none"><path d="M0 0 V-6.6 M0 0 L-6.8 -2.2 M0 0 L6.8 -2.2 M0 0 L-4.2 6.4 M0 0 L4.2 6.4"/></g></svg><svg class="r" style="left:883px;top:390.8px;" width="18" height="18" viewBox="0 0 18 18"><g transform="translate(9 9) skewX(-8)" stroke="#5F826B" stroke-width="2.1" fill="none"><path d="M0 0 V-6.6 M0 0 L-6.8 -2.2 M0 0 L6.8 -2.2 M0 0 L-4.2 6.4 M0 0 L4.2 6.4"/></g></svg><svg class="r" style="left:883px;top:434.8px;" width="18" height="18" viewBox="0 0 18 18"><g transform="translate(9 9) skewX(-8)" stroke="#5F826B" stroke-width="2.1" fill="none"><path d="M0 0 V-6.6 M0 0 L-6.8 -2.2 M0 0 L6.8 -2.2 M0 0 L-4.2 6.4 M0 0 L4.2 6.4"/></g></svg><svg class="r" style="left:883px;top:478.8px;" width="18" height="18" viewBox="0 0 18 18"><g transform="translate(9 9) skewX(-8)" stroke="#5F826B" stroke-width="2.1" fill="none"><path d="M0 0 V-6.6 M0 0 L-6.8 -2.2 M0 0 L6.8 -2.2 M0 0 L-4.2 6.4 M0 0 L4.2 6.4"/></g></svg><svg class="r" style="left:883px;top:522.8px;" width="18" height="18" viewBox="0 0 18 18"><g transform="translate(9 9) skewX(-8)" stroke="#5F826B" stroke-width="2.1" fill="none"><path d="M0 0 V-6.6 M0 0 L-6.8 -2.2 M0 0 L6.8 -2.2 M0 0 L-4.2 6.4 M0 0 L4.2 6.4"/></g></svg><svg class="r" style="left:883px;top:566.8px;" width="18" height="18" viewBox="0 0 18 18"><g transform="translate(9 9) skewX(-8)" stroke="#5F826B" stroke-width="2.1" fill="none"><path d="M0 0 V-6.6 M0 0 L-6.8 -2.2 M0 0 L6.8 -2.2 M0 0 L-4.2 6.4 M0 0 L4.2 6.4"/></g></svg><svg class="r" style="left:883px;top:610.8px;" width="18" height="18" viewBox="0 0 18 18"><g transform="translate(9 9) skewX(-8)" stroke="#5F826B" stroke-width="2.1" fill="none"><path d="M0 0 V-6.6 M0 0 L-6.8 -2.2 M0 0 L6.8 -2.2 M0 0 L-4.2 6.4 M0 0 L4.2 6.4"/></g></svg><svg class="r" style="left:883px;top:962.8px;" width="18" height="18" viewBox="0 0 18 18"><g transform="translate(9 9) skewX(-8)" stroke="#5F826B" stroke-width="2.1" fill="none"><path d="M0 0 V-6.6 M0 0 L-6.8 -2.2 M0 0 L6.8 -2.2 M0 0 L-4.2 6.4 M0 0 L4.2 6.4"/></g></svg><svg class="r" style="left:883px;top:1006.8px;" width="18" height="18" viewBox="0 0 18 18"><g transform="translate(9 9) skewX(-8)" stroke="#5F826B" stroke-width="2.1" fill="none"><path d="M0 0 V-6.6 M0 0 L-6.8 -2.2 M0 0 L6.8 -2.2 M0 0 L-4.2 6.4 M0 0 L4.2 6.4"/></g></svg><svg class="r" style="left:883px;top:1050.8px;" width="18" height="18" viewBox="0 0 18 18"><g transform="translate(9 9) skewX(-8)" stroke="#5F826B" stroke-width="2.1" fill="none"><path d="M0 0 V-6.6 M0 0 L-6.8 -2.2 M0 0 L6.8 -2.2 M0 0 L-4.2 6.4 M0 0 L4.2 6.4"/></g></svg><svg class="r" style="left:883px;top:1094.8px;" width="18" height="18" viewBox="0 0 18 18"><g transform="translate(9 9) skewX(-8)" stroke="#5F826B" stroke-width="2.1" fill="none"><path d="M0 0 V-6.6 M0 0 L-6.8 -2.2 M0 0 L6.8 -2.2 M0 0 L-4.2 6.4 M0 0 L4.2 6.4"/></g></svg><svg class="r" style="left:883px;top:1138.8px;" width="18" height="18" viewBox="0 0 18 18"><g transform="translate(9 9) skewX(-8)" stroke="#5F826B" stroke-width="2.1" fill="none"><path d="M0 0 V-6.6 M0 0 L-6.8 -2.2 M0 0 L6.8 -2.2 M0 0 L-4.2 6.4 M0 0 L4.2 6.4"/></g></svg><svg class="r" style="left:883px;top:1182.8px;" width="18" height="18" viewBox="0 0 18 18"><g transform="translate(9 9) skewX(-8)" stroke="#5F826B" stroke-width="2.1" fill="none"><path d="M0 0 V-6.6 M0 0 L-6.8 -2.2 M0 0 L6.8 -2.2 M0 0 L-4.2 6.4 M0 0 L4.2 6.4"/></g></svg><svg class="r" style="left:883px;top:1226.8px;" width="18" height="18" viewBox="0 0 18 18"><g transform="translate(9 9) skewX(-8)" stroke="#5F826B" stroke-width="2.1" fill="none"><path d="M0 0 V-6.6 M0 0 L-6.8 -2.2 M0 0 L6.8 -2.2 M0 0 L-4.2 6.4 M0 0 L4.2 6.4"/></g></svg><svg class="r" style="left:883px;top:1270.8px;" width="18" height="18" viewBox="0 0 18 18"><g transform="translate(9 9) skewX(-8)" stroke="#5F826B" stroke-width="2.1" fill="none"><path d="M0 0 V-6.6 M0 0 L-6.8 -2.2 M0 0 L6.8 -2.2 M0 0 L-4.2 6.4 M0 0 L4.2 6.4"/></g></svg><svg class="r" style="left:866px;top:254px;" width="20" height="30" viewBox="0 0 20 30"><path d="M2.9 26.4 L16.5 2.4" stroke="#5F826B" stroke-width="2.3" fill="none"/></svg><svg class="r" style="left:866px;top:914px;" width="20" height="30" viewBox="0 0 20 30"><path d="M2.9 26.4 L16.5 2.4" stroke="#5F826B" stroke-width="2.3" fill="none"/></svg><svg class="r" style="left:898px;top:606px;" width="20" height="30" viewBox="0 0 20 30"><path d="M2.9 26.4 L16.5 2.4" stroke="#5F826B" stroke-width="2.3" fill="none"/></svg><svg class="r" style="left:898px;top:1266px;" width="20" height="30" viewBox="0 0 20 30"><path d="M2.9 26.4 L16.5 2.4" stroke="#5F826B" stroke-width="2.3" fill="none"/></svg><svg class="r" style="left:917.00px;top:300.32px;overflow:visible" width="259" height="35"><g transform="translate(6.65 0) skewX(-16.70)"><text x="0" y="22.2" font-size="25.2" letter-spacing="0.8" fill="#5F826B" font-family="'Liberation Sans','Noto Sans CJK SC',sans-serif">向浏览器输出内容。</text></g></svg><svg class="r" style="left:917.00px;top:960.32px;overflow:visible" width="129" height="35"><g transform="translate(6.65 0) skewX(-16.70)"><text x="0" y="22.2" font-size="25.2" letter-spacing="0.8" fill="#5F826B" font-family="'Liberation Sans','Noto Sans CJK SC',sans-serif">直接输出</text></g></svg><div class="c" style="top:953px;left:1021.0px"><i class="d">data</i></div><svg class="r" style="left:1085.00px;top:960.32px;overflow:visible" width="207" height="35"><g transform="translate(6.65 0) skewX(-16.70)"><text x="0" y="22.2" font-size="25.2" letter-spacing="0.8" fill="#5F826B" font-family="'Liberation Sans','Noto Sans CJK SC',sans-serif">数据，通常用于</text></g></svg><div class="c" style="top:953px;left:1267.0px"><i class="d">ajax</i></div><svg class="r" style="left:1331.00px;top:960.32px;overflow:visible" width="129" height="35"><g transform="translate(6.65 0) skewX(-16.70)"><text x="0" y="22.2" font-size="25.2" letter-spacing="0.8" fill="#5F826B" font-family="'Liberation Sans','Noto Sans CJK SC',sans-serif">请求中。</text></g></svg><svg class="r" style="left:1252px;top:678.6px;overflow:hidden;" width="256" height="6" viewBox="0 0 256 6"><path d="M0 4.6 l4 -3.6 l4 3.6 l4 -3.6 l4 3.6 l4 -3.6 l4 3.6 l4 -3.6 l4 3.6 l4 -3.6 l4 3.6 l4 -3.6 l4 3.6 l4 -3.6 l4 3.6 l4 -3.6 l4 3.6 l4 -3.6 l4 3.6 l4 -3.6 l4 3.6 l4 -3.6 l4 3.6 l4 -3.6 l4 3.6 l4 -3.6 l4 3.6 l4 -3.6 l4 3.6 l4 -3.6 l4 3.6 l4 -3.6 l4 3.6 l4 -3.6 l4 3.6 l4 -3.6 l4 3.6 l4 -3.6 l4 3.6 l4 -3.6 l4 3.6 l4 -3.6 l4 3.6 l4 -3.6 l4 3.6 l4 -3.6 l4 3.6 l4 -3.6 l4 3.6 l4 -3.6 l4 3.6 l4 -3.6 l4 3.6 l4 -3.6 l4 3.6 l4 -3.6 l4 3.6 l4 -3.6 l4 3.6 l4 -3.6 l4 3.6 l4 -3.6 l4 3.6 l4 -3.6 l4 3.6" fill="none" stroke="#8A7241" stroke-width="1.4"/></svg><svg class="r" style="left:1540px;top:678.6px;overflow:hidden;" width="256" height="6" viewBox="0 0 256 6"><path d="M0 4.6 l4 -3.6 l4 3.6 l4 -3.6 l4 3.6 l4 -3.6 l4 3.6 l4 -3.6 l4 3.6 l4 -3.6 l4 3.6 l4 -3.6 l4 3.6 l4 -3.6 l4 3.6 l4 -3.6 l4 3.6 l4 -3.6 l4 3.6 l4 -3.6 l4 3.6 l4 -3.6 l4 3.6 l4 -3.6 l4 3.6 l4 -3.6 l4 3.6 l4 -3.6 l4 3.6 l4 -3.6 l4 3.6 l4 -3.6 l4 3.6 l4 -3.6 l4 3.6 l4 -3.6 l4 3.6 l4 -3.6 l4 3.6 l4 -3.6 l4 3.6 l4 -3.6 l4 3.6 l4 -3.6 l4 3.6 l4 -3.6 l4 3.6 l4 -3.6 l4 3.6 l4 -3.6 l4 3.6 l4 -3.6 l4 3.6 l4 -3.6 l4 3.6 l4 -3.6 l4 3.6 l4 -3.6 l4 3.6 l4 -3.6 l4 3.6 l4 -3.6 l4 3.6 l4 -3.6 l4 3.6" fill="none" stroke="#8A7241" stroke-width="1.4"/></svg><svg class="r" style="left:1204px;top:1338.6000000000001px;overflow:hidden;" width="80" height="6" viewBox="0 0 80 6"><path d="M0 4.6 l4 -3.6 l4 3.6 l4 -3.6 l4 3.6 l4 -3.6 l4 3.6 l4 -3.6 l4 3.6 l4 -3.6 l4 3.6 l4 -3.6 l4 3.6 l4 -3.6 l4 3.6 l4 -3.6 l4 3.6 l4 -3.6 l4 3.6 l4 -3.6 l4 3.6" fill="none" stroke="#8A7241" stroke-width="1.4"/></svg><svg class="r" style="left:1316px;top:1338.6000000000001px;overflow:hidden;" width="224" height="6" viewBox="0 0 224 6"><path d="M0 4.6 l4 -3.6 l4 3.6 l4 -3.6 l4 3.6 l4 -3.6 l4 3.6 l4 -3.6 l4 3.6 l4 -3.6 l4 3.6 l4 -3.6 l4 3.6 l4 -3.6 l4 3.6 l4 -3.6 l4 3.6 l4 -3.6 l4 3.6 l4 -3.6 l4 3.6 l4 -3.6 l4 3.6 l4 -3.6 l4 3.6 l4 -3.6 l4 3.6 l4 -3.6 l4 3.6 l4 -3.6 l4 3.6 l4 -3.6 l4 3.6 l4 -3.6 l4 3.6 l4 -3.6 l4 3.6 l4 -3.6 l4 3.6 l4 -3.6 l4 3.6 l4 -3.6 l4 3.6 l4 -3.6 l4 3.6 l4 -3.6 l4 3.6 l4 -3.6 l4 3.6 l4 -3.6 l4 3.6 l4 -3.6 l4 3.6 l4 -3.6 l4 3.6 l4 -3.6 l4 3.6" fill="none" stroke="#8A7241" stroke-width="1.4"/></svg><svg class="r" style="left:1044px;top:1118.6000000000001px;overflow:hidden;" width="64" height="6" viewBox="0 0 64 6"><path d="M0 4.6 l4 -3.6 l4 3.6 l4 -3.6 l4 3.6 l4 -3.6 l4 3.6 l4 -3.6 l4 3.6 l4 -3.6 l4 3.6 l4 -3.6 l4 3.6 l4 -3.6 l4 3.6 l4 -3.6 l4 3.6" fill="none" stroke="#8A7241" stroke-width="1.4"/></svg><svg class="r" style="left:980px;top:1558.6000000000001px;overflow:hidden;" width="96" height="6" viewBox="0 0 96 6"><path d="M0 4.6 l4 -3.6 l4 3.6 l4 -3.6 l4 3.6 l4 -3.6 l4 3.6 l4 -3.6 l4 3.6 l4 -3.6 l4 3.6 l4 -3.6 l4 3.6 l4 -3.6 l4 3.6 l4 -3.6 l4 3.6 l4 -3.6 l4 3.6 l4 -3.6 l4 3.6 l4 -3.6 l4 3.6 l4 -3.6 l4 3.6" fill="none" stroke="#9C8142" stroke-width="1.4"/></svg><div class="r" style="left:806px;top:1581px;width:1082px;height:15px;background:rgba(255,255,255,0.16);"></div></div></div><svg class="r" style="left:740px;top:917px;" width="28" height="22" viewBox="0 0 28 22"><g stroke="#CED0D6" stroke-width="2.2" fill="none"><path d="M3.2 0.600 v20.400 M6.500 4 h20 M6.500 10 h20 M6.500 16 h12"/></g></svg><svg class="r" style="left:1500px;top:715px;" width="240" height="60" viewBox="0 0 240 60"><path d="M13 41 L34 24.3 L30.5 32.5 L230.6 10.9 L31.7 43.2 L37 51.4Z" fill="#FF1D12"/></svg><div class="r" style="left:2771.5px;top:783px;width:28.5px;height:5px;background:#C9A04E;"></div><div class="r" style="left:2782px;top:1418px;width:16px;height:68.5px;background:#47484B;"></div><svg class="r" style="left:2501px;top:177.2px;" width="26" height="24" viewBox="0 0 26 24"><path d="M13 4 L22 20.2 H4z" fill="#C9A04E" stroke="#C9A04E" stroke-width="5.4" stroke-linejoin="round"/><rect x="11.4" y="6.8" width="3.2" height="8.2" rx="1.4" fill="#1E1F22"/><circle cx="13" cy="18.7" r="1.9" fill="#1E1F22"/></svg><svg class="r" style="left:2532.7px;top:180.20000000000002px;" width="10" height="20" viewBox="0 0 10 20"><path d="M0.4 5.9 L5.7 0.6 H7.9 V19.6 H5.4 V3.9 L0.4 8.6z" fill="#C9CCD2"/></svg><svg class="r" style="left:2559px;top:177.2px;" width="26" height="24" viewBox="0 0 26 24"><path d="M13 4 L22 20.2 H4z" fill="#8E7741" stroke="#8E7741" stroke-width="5.4" stroke-linejoin="round"/><rect x="11.4" y="6.8" width="3.2" height="8.2" rx="1.4" fill="#1E1F22"/><circle cx="13" cy="18.7" r="1.9" fill="#1E1F22"/></svg><svg class="r" style="left:2590.4px;top:180.20000000000002px;" width="10" height="20" viewBox="0 0 10 20"><path d="M0.4 5.9 L5.7 0.6 H7.9 V19.6 H5.4 V3.9 L0.4 8.6z" fill="#C9CCD2"/></svg><svg class="r" style="left:2603px;top:180.20000000000002px;" width="10" height="20" viewBox="0 0 10 20"><path d="M0.4 5.9 L5.7 0.6 H7.9 V19.6 H5.4 V3.9 L0.4 8.6z" fill="#C9CCD2"/></svg><svg class="r" style="left:2615.5px;top:180.20000000000002px;" width="10" height="20" viewBox="0 0 10 20"><path d="M0.4 5.9 L5.7 0.6 H7.9 V19.6 H5.4 V3.9 L0.4 8.6z" fill="#C9CCD2"/></svg><svg class="r" style="left:2641px;top:178px;" width="26" height="28" viewBox="0 0 26 28"><path d="M2.800 11.700 L10 18.200 L23 3.800" fill="none" stroke="#4F9E57" stroke-width="5"/><path d="M1.400 25.600 l5.300 -4.900 l5.300 4.900 l4.600 -4.600 l2.600 4.400 l4.800 -5.400" fill="none" stroke="#DB5C5C" stroke-width="1.900"/></svg><span class="t" style="left:2671.94px;top:176px;font-size:27px;line-height:30px;color:#C9CCD2;letter-spacing:2.780px;">20</span><svg class="r" style="left:2725.2px;top:184.7px;" width="17.6" height="11" viewBox="0 0 17.6 11"><path d="M2 9 L8.8 2 L15.6 9" fill="none" stroke="#B4B8BF" stroke-width="2.4" stroke-linecap="round" stroke-linejoin="round"/></svg><svg class="r" style="left:2767.0px;top:184.7px;" width="17.6" height="11" viewBox="0 0 17.6 11"><path d="M2 2 L8.8 9 L15.6 2" fill="none" stroke="#B4B8BF" stroke-width="2.4" stroke-linecap="round" stroke-linejoin="round"/></svg><div class="r" style="left:2448px;top:244px;width:236px;height:68px;background:#292B2F;border-radius:9px;"></div><svg class="r" style="left:2471.5px;top:261.5px;" width="33" height="33" viewBox="0 0 32 32"><defs><linearGradient id="psg2" x1="0.1" y1="0" x2="0.5" y2="1"><stop offset="0" stop-color="#FF2E8C"/><stop offset=".3" stop-color="#F535A0"/><stop offset=".6" stop-color="#B74AF7"/><stop offset="1" stop-color="#6B57FF"/></linearGradient>
<linearGradient id="psh2" x1="0" y1="0" x2="0.3" y2="1"><stop offset="0" stop-color="#C06CFF"/><stop offset=".5" stop-color="#9A48F2"/><stop offset="1" stop-color="#7A58FC"/></linearGradient></defs>
<path d="M0 5.7 L5.2 0 L16.9 2.85 L19.3 2 L27.8 3.35 L32 12.9 L28.5 16.9 L32 24.1 L20.3 31.8 L9.2 27.6 L3.2 24Z" fill="url(#psg2)"/>
<path d="M5.2 0 L16.9 2.85 L15.5 6.4 L8 5Z" fill="#FF5CAB" opacity=".8"/>
<path d="M15.3 5 L19.3 2 L27.8 3.35 L32 12.9 L28.5 16.9 L32 24.1 L25.6 28.3 L25.6 6.4Z" fill="url(#psh2)"/>
<rect x="6.2" y="6.4" width="19.4" height="19.3" fill="#0B020F"/>
<text x="8.3" y="16" font-family="Liberation Sans,sans-serif" font-weight="700" font-size="10" fill="#fff">PS</text>
<rect x="8.4" y="22.1" width="7.7" height="1.7" fill="#fff"/></svg><svg class="r" style="left:2526.8px;top:264.7px;" width="27.5" height="27.5" viewBox="0 0 28 28"><circle cx="14" cy="14" r="14" fill="#DB4437"/>
<path d="M26.12 7 A14 14 0 0 1 14 28 L20.06 17.5 L14 7z" fill="#FFCD40"/>
<path d="M14 28 A14 14 0 0 1 1.88 7 L7.94 17.5 L20.06 17.5z" fill="#0F9D58"/>
<circle cx="14" cy="14" r="6.6" fill="#F1F1F1"/><circle cx="14" cy="14" r="5.2" fill="#4285F4"/></svg><svg class="r" style="left:2576px;top:261px;" width="32" height="33" viewBox="0 0 32 33"><defs><radialGradient id="ffg" cx=".7" cy=".2" r="1"><stop offset="0" stop-color="#FFF36B"/><stop offset=".35" stop-color="#FF980E"/><stop offset=".7" stop-color="#FF3647"/><stop offset="1" stop-color="#E31587"/></radialGradient></defs>
<path d="M20 1 C22 5 26 7 28.5 11 C32 17 31 26 24 30.5 C17 35 7 32 3 25 C-0.5 19 1 12 4 8 C4.5 10 5 11 6.5 12 C7 9 9 6.5 12 6 C11.5 8 13 10 15 10.5 C19 9 21 5 20 1Z" fill="url(#ffg)"/>
<circle cx="16.5" cy="19.5" r="7.5" fill="#7542E5"/><path d="M9 17 C11 14 15 13.5 18 15 C15.5 15 14 16.5 14.5 18.5 C12 19 10 18.5 9 17Z" fill="#FF980E"/></svg><svg class="r" style="left:2629.9px;top:263.7px;" width="28.4" height="28.5" viewBox="0 0 28.4 28.5"><defs><linearGradient id="edA" x1="0" y1="0" x2="1" y2="0.25"><stop offset="0" stop-color="#35C4F4"/><stop offset=".5" stop-color="#34C3E0"/><stop offset=".85" stop-color="#50DB84"/><stop offset="1" stop-color="#66EA73"/></linearGradient>
<linearGradient id="edB" x1="0" y1="0" x2="0.6" y2="1"><stop offset="0" stop-color="#1B9DE2"/><stop offset="1" stop-color="#0878D6"/></linearGradient></defs>
<circle cx="14.2" cy="14.2" r="14.2" fill="url(#edB)"/>
<path d="M8.5 14 C7.5 20 10 27 15 28.4 C20 28.4 24.5 25.5 26.8 20.5 C22 22.5 16 22 12.500 18 C11 16 11 13 13 11.500 C11 11.500 9 12.500 8.500 14Z" fill="#10529B"/>
<path d="M14.200 11.600 C11.500 12 10.300 15 11.500 17.500 C13 20.500 17 22 21 21.800 C23.500 21.700 25.500 21.200 26.800 20.400 L29 20 L29 17 L28.100 17.400 C25 19.300 20 19.500 16.500 17.600 C17.800 15.500 17 12.200 14.200 11.600Z" fill="#292B2F"/>
<path d="M0.400 11.500 A14.200 14.200 0 0 1 28.400 14.200 C28.400 15.400 28.300 16.500 28.100 17.400 C25 19.300 20 19.500 16.500 17.600 C17.800 15.500 17 12.500 14.200 11.400 C13 8.500 8 6 3.500 8 C2 9 1 10 0.400 11.500Z" fill="url(#edA)"/></svg><div class="r" style="left:650px;top:1598px;width:2150px;height:2px;background:#393B40;"></div><span class="t" style="left:671.16px;top:1608px;font-size:27px;line-height:30px;color:#A8ADB5;letter-spacing:0.746px;">baseControl</span><svg class="r" style="left:846.0px;top:1615.5px;" width="10" height="15" viewBox="0 0 10 15"><path d="M2 2 L8 7.5 L2 13" fill="none" stroke="#6F737A" stroke-width="2" stroke-linecap="round" stroke-linejoin="round"/></svg><span class="t" style="left:871.57px;top:1608px;font-size:27px;line-height:30px;color:#A8ADB5;letter-spacing:0.448px;">display()</span><svg class="r" style="left:28px;top:1668px;" width="18" height="18" viewBox="0 0 18 18"><rect x="1.300" y="1.300" width="13.200" height="13.200" rx="3" fill="#25324D" stroke="#548AF7" stroke-width="2.200"/></svg><span class="t" style="left:52.88px;top:1660px;font-size:27px;line-height:30px;color:#A8ADB5;letter-spacing:-1.920px;">WWW</span><svg class="r" style="left:145.8px;top:1665.2px;" width="11.2" height="17.6" viewBox="0 0 11.2 17.6"><path d="M2 2 L9.2 8.8 L2 15.6" fill="none" stroke="#A3A7AE" stroke-width="2" stroke-linecap="round" stroke-linejoin="round"/></svg><span class="t" style="left:176.39px;top:1660px;font-size:27px;line-height:30px;color:#A8ADB5;letter-spacing:1.367px;">tmp</span><svg class="r" style="left:241.70000000000002px;top:1665.2px;" width="11.2" height="17.6" viewBox="0 0 11.2 17.6"><path d="M2 2 L9.2 8.8 L2 15.6" fill="none" stroke="#A3A7AE" stroke-width="2" stroke-linecap="round" stroke-linejoin="round"/></svg><span class="t" style="left:270.96px;top:1660px;font-size:27px;line-height:30px;color:#A8ADB5;letter-spacing:0.962px;">backup</span><svg class="r" style="left:381.4px;top:1665.2px;" width="11.2" height="17.6" viewBox="0 0 11.2 17.6"><path d="M2 2 L9.2 8.8 L2 15.6" fill="none" stroke="#A3A7AE" stroke-width="2" stroke-linecap="round" stroke-linejoin="round"/></svg><span class="t" style="left:411.24px;top:1660px;font-size:27px;line-height:30px;color:#A8ADB5;letter-spacing:0.798px;">202504091306413.code</span><svg class="r" style="left:735.8px;top:1665.2px;" width="11.2" height="17.6" viewBox="0 0 11.2 17.6"><path d="M2 2 L9.2 8.8 L2 15.6" fill="none" stroke="#A3A7AE" stroke-width="2" stroke-linecap="round" stroke-linejoin="round"/></svg><span class="t" style="left:766.42px;top:1660px;font-size:27px;line-height:30px;color:#A8ADB5;letter-spacing:0.753px;">framework</span><svg class="r" style="left:917.8px;top:1665.2px;" width="11.2" height="17.6" viewBox="0 0 11.2 17.6"><path d="M2 2 L9.2 8.8 L2 15.6" fill="none" stroke="#A3A7AE" stroke-width="2" stroke-linecap="round" stroke-linejoin="round"/></svg><span class="t" style="left:947.06px;top:1660px;font-size:27px;line-height:30px;color:#A8ADB5;letter-spacing:0.864px;">base</span><svg class="r" style="left:1026.4px;top:1665.2px;" width="11.2" height="17.6" viewBox="0 0 11.2 17.6"><path d="M2 2 L9.2 8.8 L2 15.6" fill="none" stroke="#A3A7AE" stroke-width="2" stroke-linecap="round" stroke-linejoin="round"/></svg><span class="t" style="left:1056.39px;top:1662px;font-size:18px;line-height:20px;color:#548AF7;font-weight:700;font-style:italic;transform:scaleX(0.982);transform-origin:0 0;">php</span><span class="t" style="left:1095.55px;top:1660px;font-size:27px;line-height:30px;color:#A8ADB5;letter-spacing:0.623px;">control.class.php</span><svg class="r" style="left:1326.4px;top:1665.2px;" width="11.2" height="17.6" viewBox="0 0 11.2 17.6"><path d="M2 2 L9.2 8.8 L2 15.6" fill="none" stroke="#A3A7AE" stroke-width="2" stroke-linecap="round" stroke-linejoin="round"/></svg><svg class="r" style="left:1357px;top:1659px;" width="30" height="30" viewBox="0 0 30 30"><circle cx="15" cy="15" r="12.8" fill="#25324D" stroke="#548AF7" stroke-width="2.2"/><path d="M20.2 10.8 a6.6 6.6 0 1 0 0 8.4" fill="none" stroke="#548AF7" stroke-width="2.4" stroke-linecap="round"/></svg><span class="t" style="left:1395.46px;top:1660px;font-size:27px;line-height:30px;color:#A8ADB5;letter-spacing:0.756px;">baseControl</span><svg class="r" style="left:1566.1000000000001px;top:1665.2px;" width="11.2" height="17.6" viewBox="0 0 11.2 17.6"><path d="M2 2 L9.2 8.8 L2 15.6" fill="none" stroke="#A3A7AE" stroke-width="2" stroke-linecap="round" stroke-linejoin="round"/></svg><svg class="r" style="left:1597px;top:1659px;" width="30" height="30" viewBox="0 0 30 30"><circle cx="15" cy="15" r="12.8" fill="#402929" stroke="#DB5C5C" stroke-width="2.2"/><path d="M8.5 20.5 v-8.5 M8.5 14.5 a3 3 0 0 1 6.3 0 v6 M14.8 14.5 a3 3 0 0 1 6.3 0 v6" fill="none" stroke="#DB5C5C" stroke-width="2.2" stroke-linecap="round"/></svg><svg class="r" style="left:1633px;top:1662px;" width="20" height="20" viewBox="0 0 20 20"><rect x="4.500" y="8" width="12.500" height="10" rx="1" fill="#57965C"/><path d="M7.500 8 v-3 a2.800 2.800 0 0 0 -5.600 0 v1.500" fill="none" stroke="#57965C" stroke-width="2"/></svg><span class="t" style="left:1667.57px;top:1660px;font-size:27px;line-height:30px;color:#A8ADB5;letter-spacing:0.524px;">display</span><span class="t" style="left:2088.59px;top:1660px;font-size:27px;line-height:30px;color:#A8ADB5;letter-spacing:-0.198px;">PHP: 7.0</span><span class="t" style="left:2227.63px;top:1660px;font-size:27px;line-height:30px;color:#A8ADB5;letter-spacing:0.713px;">875:28</span><span class="t" style="left:2344.39px;top:1660px;font-size:27px;line-height:30px;color:#A8ADB5;letter-spacing:-0.513px;">LF</span><span class="t" style="left:2406.92px;top:1660px;font-size:27px;line-height:30px;color:#A8ADB5;letter-spacing:0.891px;">UTF-8</span><svg class="r" style="left:2520px;top:1660px;" width="32" height="32" viewBox="0 0 32 32"><g fill="none" stroke="#CED0D6" stroke-width="2.200" stroke-linecap="round"><path d="M4.500 16.500 C6 8.500 20 5.500 28 10"/><path d="M8.500 26.800 C14 29.500 22 28.500 25.500 25"/><path d="M9.500 19 C9.500 11.500 24 9.500 27.500 15.500 C28.500 21 17 24.500 12.500 21.500"/><path d="M3.500 28.200 L28.200 3.500"/></g></svg><svg class="r" style="left:2584px;top:1657px;" width="36" height="36" viewBox="0 0 36 36"><g fill="none" stroke="#CED0D6" stroke-width="2.2" stroke-linecap="round" stroke-linejoin="round">
<path d="M16 9 a7.5 7.5 0 0 0 -6 7.5 v5.5 a7.5 9 0 0 0 15 0 v-2"/><path d="M10 11.5 a5 5 0 0 1 5.5 -4.500"/>
<path d="M3 21 h7 M25 21 h6 M4 14 l6 3 M4 29.500 l6 -3 M30 29.500 l-5.500 -3"/></g>
<circle cx="19.500" cy="15.500" r="2.300" fill="#5FAD65"/><path d="M20.500 9.500 a6.500 6.500 0 0 1 6 6 M21 4.500 a11.500 11.500 0 0 1 10.500 10.500" fill="none" stroke="#5FAD65" stroke-width="2.200" stroke-linecap="round"/></svg><span class="t" style="left:2648.58px;top:1660px;font-size:27px;line-height:30px;color:#A8ADB5;">4</span><svg class="r" style="left:2672.50px;top:1663.74px;overflow:visible" width="101" height="35"><text x="0" y="22.3" font-size="25.3" fill="#A8ADB5" font-family="'Liberation Sans','Noto Sans CJK SC',sans-serif">个空格</text></svg><svg class="r" style="left:2754px;top:1660px;" width="32" height="32" viewBox="0 0 32 32"><g fill="none" stroke="#CED0D6" stroke-width="2.200" stroke-linejoin="round" stroke-linecap="round"><path d="M12 28.800 h-5.500 a3 3 0 0 1 -3 -3 v-14.300 l8 -8 h7.500 a3 3 0 0 1 3 3 v6.500"/><path d="M3.800 11.800 h5.200 a2.500 2.500 0 0 0 2.500 -2.500 v-5.500"/></g><circle cx="20" cy="24" r="6.300" fill="none" stroke="#CED0D6" stroke-width="3.200" stroke-dasharray="3.300 3.300"/><circle cx="20" cy="24" r="4.600" fill="none" stroke="#CED0D6" stroke-width="2"/><circle cx="20" cy="24" r="1.500" fill="#CED0D6"/></svg><svg class="r" style="left:2818px;top:1660px;" width="32" height="32" viewBox="0 0 32 32"><g fill="none" stroke="#CED0D6" stroke-width="2.200" stroke-linecap="round"><rect x="3.300" y="14.800" width="17.500" height="12.500" rx="3"/><path d="M17 14.800 v-4.500 a5.300 5.300 0 0 1 10.600 0 v3 M12 19 v4"/></g></svg><svg class="r" style="left:2822px;top:100px;" width="42" height="44" viewBox="0 0 42 44"><g fill="none" stroke="#CED0D6" stroke-width="3" stroke-linecap="round" stroke-linejoin="round"><path d="M5.500 32 h31 l-4.500 -7.500 v-6.500 a11 11 0 0 0 -22 0 v6.500z"/><path d="M17.5 37.5 a4 4 0 0 0 7 0"/></g></svg><div class="r" style="left:2848px;top:102px;width:14.4px;height:14.4px;background:#548AF7;border-radius:50%;box-shadow:0 0 0 2px #2B2D30;"></div><svg class="r" style="left:2823px;top:184px;" width="38" height="36" viewBox="0 0 38 36"><path d="M32.5 27.5 L31.3 28.6 L30.0 29.7 L28.5 30.6 L27.0 31.4 L25.4 32.0 L23.8 32.5 L22.1 32.7 L20.5 32.9 L18.8 32.8 L17.1 32.7 L15.5 32.3 L14.0 31.8 L12.5 31.2 L11.1 30.4 L9.8 29.5 L8.6 28.5 L7.5 27.3 L6.6 26.1 L5.8 24.8 L5.2 23.5 L4.7 22.1 L4.4 20.7 L4.2 19.2 L4.2 17.8 L4.3 16.4 L4.6 15.0 L5.1 13.7 L5.7 12.4 L6.4 11.2 L7.2 10.0 L8.2 9.0 L9.2 8.1 L10.3 7.2 L11.5 6.5 L12.8 6.0 L14.1 5.5 L15.5 5.2 L16.9 5.0 L18.2 5.0 L19.6 5.1 L20.9 5.3 L22.2 5.6 L23.4 6.1 L24.6 6.7 L25.7 7.3 L26.7 8.1 L27.6 9.0 L28.4 9.9 L29.1 10.9 L29.7 12.0 L30.1 13.1 L30.4 14.2 L30.6 15.3 L30.7 16.5 L30.7 17.6 L30.5 18.7 L30.2 19.8 L29.8 20.8 L29.3 21.8 L28.7 22.7 L28.0 23.6 L27.2 24.3 L26.3 25.0 L25.4 25.6 L24.5 26.1 L23.4 26.5 L22.4 26.8 L21.4 26.9 L20.3 27.0 L19.3 27.0 L18.3 26.9 L17.3 26.6 L16.3 26.3 L15.4 25.9 L14.6 25.5 L13.8 24.9 L13.1 24.3 L12.5 23.6 L11.9 22.9 L11.5 22.1 L11.1 21.3 L10.8 20.5 L10.6 19.7 L10.6 18.8 L10.6 18.0 L10.7 17.2 L10.9 16.4 L11.1 15.7 L11.5 14.9 L11.9 14.3 L12.4 13.7 L12.9 13.1 L13.5 12.6 L14.1 12.2 L14.8 11.9 L15.5 11.6 L16.2 11.4 L16.9 11.2 L17.6 11.2 L18.3 11.2 L19.0 11.3 L19.7 11.4 L20.3 11.6 L20.9 11.9 L21.5 12.2 L22.0 12.6 L22.4 13.0 L22.8 13.4 L23.1 13.9 L23.4 14.3 L23.6 14.9 L23.8 15.4 L23.9 15.9 L23.9 16.4 L23.9 16.9 L23.8 17.3 L23.7 17.8 L23.5 18.2 L23.3 18.6 L23.0 19.0 L22.7 19.3 L22.4 19.6 L22.0 19.8 L21.7 20.0 L21.3 20.2 L20.9 20.3 L20.5 20.3 L20.2 20.3 L19.8 20.3 L19.5 20.2 L19.2 20.1 L18.9 20.0 L18.7 19.8 L18.4 19.6 L18.3 19.4 L18.1 19.2 L18.0 19.0 L18.0 18.8 L18.0 18.5 L18.1 18.3" fill="none" stroke="#CED0D6" stroke-width="3" stroke-linecap="round" stroke-linejoin="round"/></svg><svg class="r" style="left:2824px;top:262px;" width="36" height="40" viewBox="0 0 36 40"><g fill="none" stroke="#CED0D6" stroke-width="3"><ellipse cx="18" cy="9" rx="14.500" ry="5.800"/><path d="M3.500 9 v22 a14.500 5.800 0 0 0 29 0 v-22 M3.500 16.300 a14.500 5.800 0 0 0 29 0 M3.500 23.600 a14.500 5.800 0 0 0 29 0"/></g></svg>
</body></html>
